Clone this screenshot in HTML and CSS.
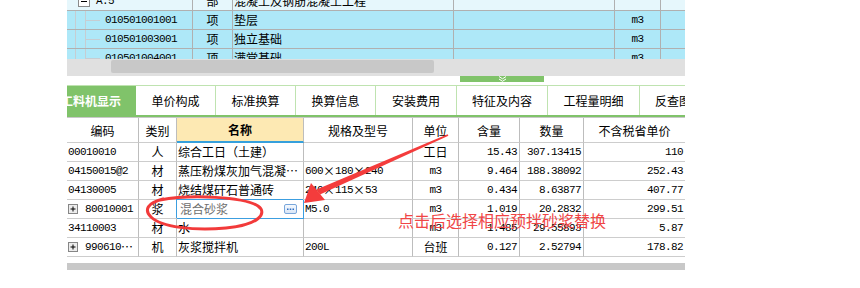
FILE: index.html
```html
<!DOCTYPE html>
<html lang="zh-CN">
<head>
<meta charset="utf-8">
<title>工料机显示</title>
<link rel="stylesheet" href="styles.css">
</head>
<body>
<div class="app">
  <div class="upper">
    <div class="upper-inner">
      <div class="urow r0">
        <div class="uc u1 root"><span class="mbox"><svg width="12" height="12" viewBox="0 0 12 12"><rect x="0.5" y="0.5" width="11" height="11" fill="#fff" stroke="#8a8a8a"/><path d="M3 6.5H9" stroke="#000"/></svg></span><span class="m">A.5</span></div>
        <div class="uc u2 c">部</div>
        <div class="uc u3">混凝土及钢筋混凝土工程</div>
        <div class="uc u4"></div>
        <div class="uc u5"></div>
        <div class="uc u6"></div>
      </div>
      <div class="urow">
        <div class="uc u1 tree"><span class="g1"></span><span class="g2"></span><span class="br"></span><span class="m">010501001001</span></div>
        <div class="uc u2 c">项</div>
        <div class="uc u3">垫层</div>
        <div class="uc u4"></div>
        <div class="uc u5 c m">m3</div>
        <div class="uc u6"></div>
      </div>
      <div class="urow">
        <div class="uc u1 tree"><span class="g1"></span><span class="g2"></span><span class="br"></span><span class="m">010501003001</span></div>
        <div class="uc u2 c">项</div>
        <div class="uc u3">独立基础</div>
        <div class="uc u4"></div>
        <div class="uc u5 c m">m3</div>
        <div class="uc u6"></div>
      </div>
      <div class="urow">
        <div class="uc u1 tree"><span class="g1"></span><span class="g2"></span><span class="br"></span><span class="m">010501004001</span></div>
        <div class="uc u2 c">项</div>
        <div class="uc u3">满堂基础</div>
        <div class="uc u4"></div>
        <div class="uc u5 c m">m3</div>
        <div class="uc u6"></div>
      </div>
    </div>
  </div>
  <div class="uscroll"><div class="thumb"></div></div>
  <div class="split"><div class="handle"><svg width="9" height="6" viewBox="0 0 9 6"><path d="M1 0.5L4.5 2.8L8 0.5M1 3L4.5 5.3L8 3" stroke="#fff" fill="none"/></svg></div></div>

  <div class="tabs">
    <div class="tabs-inner">
      <div class="tab on t1">工料机显示</div>
      <div class="tab t80">单价构成</div>
      <div class="tab t80">标准换算</div>
      <div class="tab t80">换算信息</div>
      <div class="tab t81">安装费用</div>
      <div class="tab t91">特征及内容</div>
      <div class="tab t92">工程量明细</div>
      <div class="tab tlast">反查图形工程量</div>
    </div>
  </div>

  <div class="grid">
    <div class="thead">
      <div class="th k1">编码</div>
      <div class="th k2">类别</div>
      <div class="th k3 hsel">名称</div>
      <div class="th k4">规格及型号</div>
      <div class="th k5">单位</div>
      <div class="th k6">含量</div>
      <div class="th k7">数量</div>
      <div class="th k8">不含税省单价</div>
    </div>
    <div class="trow">
      <div class="td k1 l m">00010010</div>
      <div class="td k2 c">人</div>
      <div class="td k3 l">综合工日（土建）</div>
      <div class="td k4 l"></div>
      <div class="td k5 c">工日</div>
      <div class="td k6 r m">15.43</div>
      <div class="td k7 r m">307.13415</div>
      <div class="td k8 r m">110</div>
    </div>
    <div class="trow">
      <div class="td k1 l m">04150015@2</div>
      <div class="td k2 c">材</div>
      <div class="td k3 l">蒸压粉煤灰加气混凝…</div>
      <div class="td k4 l m">600<span class="x">×</span>180<span class="x">×</span>240</div>
      <div class="td k5 c m">m3</div>
      <div class="td k6 r m">9.464</div>
      <div class="td k7 r m">188.38092</div>
      <div class="td k8 r m">252.43</div>
    </div>
    <div class="trow">
      <div class="td k1 l m">04130005</div>
      <div class="td k2 c">材</div>
      <div class="td k3 l">烧结煤矸石普通砖</div>
      <div class="td k4 l m">240<span class="x">×</span>115<span class="x">×</span>53</div>
      <div class="td k5 c m">m3</div>
      <div class="td k6 r m">0.434</div>
      <div class="td k7 r m">8.63877</div>
      <div class="td k8 r m">407.77</div>
    </div>
    <div class="trow">
      <div class="td k1 l m"><span class="pbox"><svg width="10" height="10" viewBox="0 0 10 10"><rect x="0.5" y="0.5" width="9" height="9" fill="#ececec" stroke="#868686"/><path d="M2.5 5H7.5M5 2.5V7.5" stroke="#000"/></svg></span>80010001</div>
      <div class="td k2 c">浆</div>
      <div class="td k3 l sel"><span class="grey">混合砂浆</span><span class="more"><svg width="11" height="8" viewBox="0 0 11 8"><rect x="2" y="3.5" width="1.5" height="1.5" fill="#2f6fc4"/><rect x="4.75" y="3.5" width="1.5" height="1.5" fill="#2f6fc4"/><rect x="7.5" y="3.5" width="1.5" height="1.5" fill="#2f6fc4"/></svg></span></div>
      <div class="td k4 l m">M5.0</div>
      <div class="td k5 c m">m3</div>
      <div class="td k6 r m">1.019</div>
      <div class="td k7 r m">20.2832</div>
      <div class="td k8 r m">299.51</div>
    </div>
    <div class="trow">
      <div class="td k1 l m">34110003</div>
      <div class="td k2 c">材</div>
      <div class="td k3 l">水</div>
      <div class="td k4 l"></div>
      <div class="td k5 c m">m3</div>
      <div class="td k6 r m">1.485</div>
      <div class="td k7 r m">29.55893</div>
      <div class="td k8 r m">5.87</div>
    </div>
    <div class="trow">
      <div class="td k1 l m"><span class="pbox"><svg width="10" height="10" viewBox="0 0 10 10"><rect x="0.5" y="0.5" width="9" height="9" fill="#ececec" stroke="#868686"/><path d="M2.5 5H7.5M5 2.5V7.5" stroke="#000"/></svg></span>990610<span class="ell">…</span></div>
      <div class="td k2 c">机</div>
      <div class="td k3 l">灰浆搅拌机</div>
      <div class="td k4 l m">200L</div>
      <div class="td k5 c">台班</div>
      <div class="td k6 r m">0.127</div>
      <div class="td k7 r m">2.52794</div>
      <div class="td k8 r m">178.82</div>
    </div>
  </div>
  <div class="hscroll"></div>
</div>

<svg class="marks" width="860" height="288" viewBox="0 0 860 288">
  <path d="M160 200 C192 194 244 197 258 206 C268 213 259 225 226 228 C194 231 161 227 151 217 C144 210 147 203 163 199" fill="none" stroke="#f23a3a" stroke-width="3" stroke-linecap="round"/>
  <polygon points="447.6,134.2 448.4,135.8 320,194.5 316.5,189.5" fill="#f43c3c"/>
  <polygon points="304,203 311,183 325,200" fill="#f43c3c"/>
</svg>
<div class="note">点击后选择相应预拌砂浆替换</div>
</body>
</html>
```

FILE: styles.css
```css
body {
  margin: 0;
  position: relative;
  width: 860px;
  height: 288px;
  overflow: hidden;
  background: #fff;
  font-family: "Noto Sans CJK SC", sans-serif;
  font-size: 12px;
  color: #000;
}

.app {
  margin-left: 67px;
  width: 618px;
}

.m {
  font-family: "Liberation Mono", monospace;
  font-size: 11px;
  letter-spacing: -0.6px;
}

/* upper tree grid */
.upper {
  height: 59px;
  overflow: hidden;
}
.upper-inner {
  margin-top: -8px;
}
.urow {
  display: flex;
  height: 19px;
  background: #aee8f8;
}
.urow.r0 {
  background: #e6f7fc;
}
.uc {
  box-sizing: border-box;
  height: 19px;
  line-height: 18px;
  border-right: 1px solid #b0b0b0;
  border-bottom: 1px solid #b0b0b0;
  white-space: nowrap;
  overflow: hidden;
  display: flex;
  align-items: center;
  flex: none;
}
.uc.c { justify-content: center; }
.u1 { width: 126px; }
.u2 { width: 40px; }
.u3 { width: 221px; padding-left: 1px; }
.u4 { width: 161px; }
.u5 { width: 46px; }
.u6 { flex: 1; border-right: none; }

.root { padding-left: 11px; }
.mbox {
  display: flex;
  width: 12px;
  height: 12px;
  margin-right: 6px;
}
.tree { align-items: stretch; }
.tree .m { line-height: 18px; }
.g1 {
  box-sizing: border-box;
  width: 9px;
  border-right: 1px solid #c6cdd2;
}
.g2 { width: 9px; }
.br {
  box-sizing: border-box;
  width: 15px;
  margin-right: 5px;
  border-left: 1px solid #c6cdd2;
  background: linear-gradient(#c6cdd2, #c6cdd2) no-repeat 0 9px / 100% 1px;
}

.uscroll {
  box-sizing: border-box;
  height: 17px;
  padding-top: 1px;
  background: #e0e0e0;
}
.thumb {
  margin-left: 44px;
  width: 323px;
  height: 13px;
  background: #c8c8c8;
  border-radius: 2px;
}

.split {
  height: 9px;
}
.handle {
  margin-left: 393px;
  width: 84px;
  height: 6px;
  background: #80c36a;
  display: flex;
  justify-content: center;
}

/* tabs */
.tabs {
  height: 29px;
  border-top: 1px solid #bfe3b0;
  border-bottom: 2px solid #80c36a;
  overflow: hidden;
}
.tabs-inner {
  display: flex;
  height: 29px;
  margin-left: -21px;
}
.tab {
  box-sizing: border-box;
  flex: none;
  height: 29px;
  line-height: 29px;
  text-align: center;
  white-space: nowrap;
  border-right: 1px solid #bfe3b0;
}
.tab.on {
  width: 90px;
  background: #80c36a;
  color: #fff;
  font-weight: bold;
  border-right: none;
  box-shadow: 0 -1px 0 #80c36a;
}
.t80 { width: 80px; }
.t81 { width: 81px; }
.t91 { width: 91px; }
.t92 { width: 92px; }
.tlast {
  width: 140px;
  text-align: left;
  padding-left: 15px;
  border-right: none;
}

/* lower grid */
.grid {
  border-top: 1px solid #c8c8c8;
}
.thead, .trow {
  display: flex;
}
.th, .td {
  box-sizing: border-box;
  flex: none;
  display: flex;
  align-items: center;
  white-space: nowrap;
  overflow: hidden;
  border-right: 1px solid #bdbdbd;
  border-bottom: 1px solid #cdcdcd;
}
.th {
  height: 25px;
  justify-content: center;
}
.th.hsel {
  background: #fde9b3;
  font-weight: bold;
  border-bottom: 2px solid #36a0dc;
}
.td {
  height: 19px;
  line-height: 18px;
}
.k1 { width: 72px; }
.k2 { width: 38px; }
.k3 { width: 127px; }
.k4 { width: 109px; }
.k5 { width: 46px; }
.k6 { width: 61px; }
.k7 { width: 64px; }
.k8 { flex: 1; border-right: none; }

.td.l { justify-content: flex-start; padding-left: 1px; }
.td.c { justify-content: center; }
.td.r { justify-content: flex-end; padding-right: 2px; }

.x {
  display: inline-block;
  width: 12px;
  text-align: center;
  font-family: "Noto Sans CJK SC", sans-serif;
  font-size: 12px;
  letter-spacing: 0;
}
.ell {
  font-family: "Noto Sans CJK SC", sans-serif;
  font-size: 12px;
  letter-spacing: 0;
}
.pbox {
  display: flex;
  width: 10px;
  height: 10px;
  margin-right: 7px;
}

.td.sel {
  border-right-color: #3c9ee0;
  border-bottom-color: #3c9ee0;
  box-shadow: -1px -1px 0 #3c9ee0;
  padding-left: 3px;
}
.grey {
  color: #6e6e6e;
}
.more {
  box-sizing: border-box;
  display: flex;
  margin-left: auto;
  margin-right: 6px;
  width: 13px;
  height: 10px;
  border: 1px solid #79a6da;
  border-radius: 2px;
  background: linear-gradient(#f5f9fe, #d9e6f7);
  align-items: center;
  justify-content: center;
}

.hscroll {
  margin-top: 6px;
  height: 7px;
  background: #c8c8c8;
}

/* annotations */
.marks {
  position: absolute;
  left: 0;
  top: 0;
  pointer-events: none;
}
.note {
  position: absolute;
  left: 398px;
  top: 212px;
  font-size: 16px;
  line-height: 16px;
  color: #f04646;
  white-space: nowrap;
}
```
